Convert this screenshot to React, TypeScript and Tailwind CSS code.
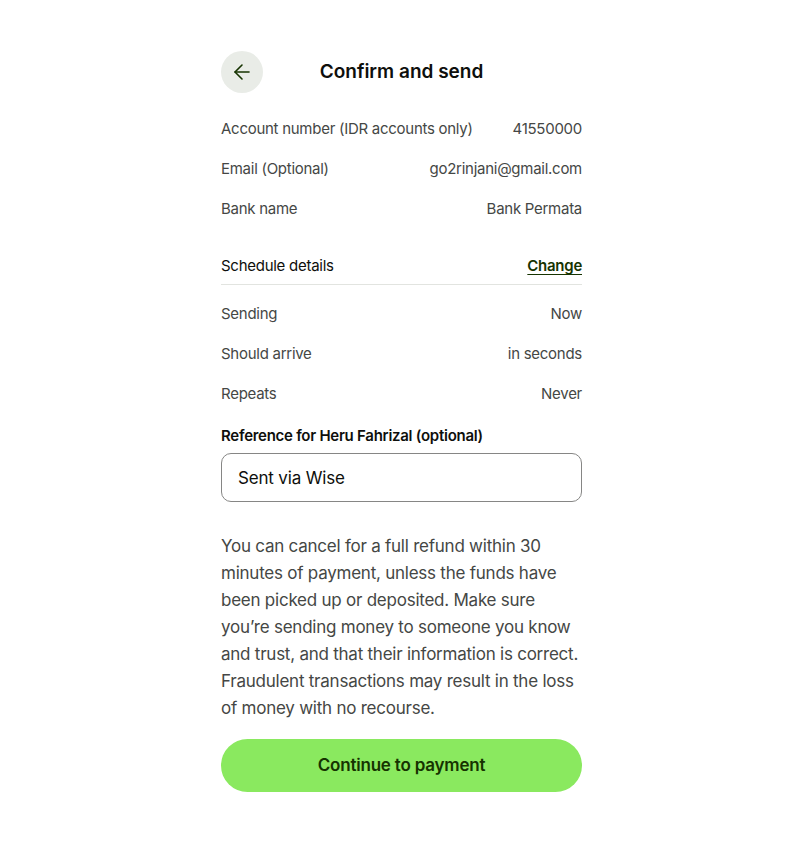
import { ArrowLeft } from 'lucide-react'

const recipient = [
  { label: 'Account number (IDR accounts only)', value: '41550000' },
  { label: 'Email (Optional)', value: 'go2rinjani@gmail.com' },
  { label: 'Bank name', value: 'Bank Permata' },
]

const schedule = [
  { label: 'Sending', value: 'Now' },
  { label: 'Should arrive', value: 'in seconds' },
  { label: 'Repeats', value: 'Never' },
]

function Row({ label, value }: { label: string; value: string }) {
  return (
    <div className="flex h-10 items-center justify-between text-[15px] tracking-[-0.018em] text-[#454745]">
      <span>{label}</span>
      <span>{value}</span>
    </div>
  )
}

export default function App() {
  return (
    <div className="min-h-screen bg-white font-['Inter','Liberation_Sans',sans-serif]">
      <div className="mx-auto w-[361px] pt-[51px] pb-10">
        <div className="flex h-[42px] items-center">
          <button className="flex h-[42px] w-[42px] items-center justify-center rounded-full bg-[#e9ece7] text-[#163300]">
            <ArrowLeft size={24} strokeWidth={1.6} />
          </button>
          <h1 className="flex-1 text-center text-[19px] font-semibold text-[#0e0f0c]">Confirm and send</h1>
          <div className="w-[42px]" />
        </div>

        <div className="mt-[16px]">
          {recipient.map((r) => (
            <Row key={r.label} {...r} />
          ))}
        </div>

        <div className="mt-[17px] flex h-[39px] items-center justify-between border-b border-[#e2e4e0] pt-[3px] text-[15px] tracking-[-0.018em]">
          <span className="text-[#0e0f0c]">Schedule details</span>
          <a href="#" className="font-semibold text-[#163300] underline underline-offset-[3px]">
            Change
          </a>
        </div>

        <div className="mt-[9px]">
          {schedule.map((r) => (
            <Row key={r.label} {...r} />
          ))}
        </div>

        <label className="mt-[11px] block text-[15px] leading-[22px] font-semibold tracking-[-0.018em] text-[#0e0f0c]">
          Reference for Heru Fahrizal (optional)
        </label>
        <input
          defaultValue="Sent via Wise"
          className="mt-[6px] block h-[49px] w-full rounded-[10px] border border-[#868685] px-4 text-[17px] tracking-[-0.01em] text-[#0e0f0c] outline-none"
        />

        <p className="mt-[31px] text-[17px] leading-[27px] tracking-[-0.014em] text-[#454745]">
          You can cancel for a full refund within 30 minutes of payment, unless the funds have been picked up or deposited. Make sure you’re sending money to someone you know and trust, and that their information is correct. Fraudulent transactions may result in the loss of money with no recourse.
        </p>

        <button className="mt-[17px] h-[53px] w-full rounded-full bg-[#8ae95f] text-[17px] font-semibold tracking-[-0.012em] text-[#163300]">
          Continue to payment
        </button>
      </div>
    </div>
  )
}
